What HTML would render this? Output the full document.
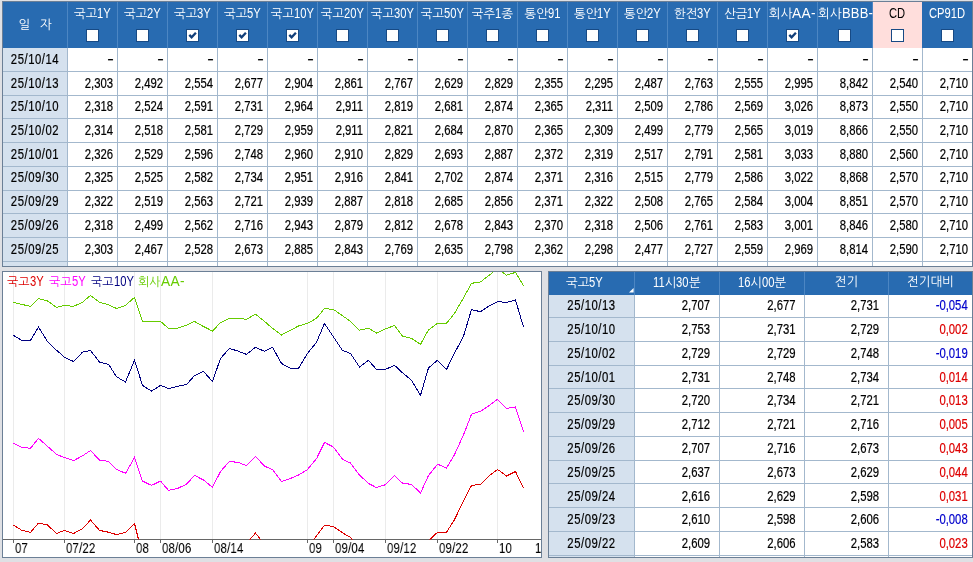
<!DOCTYPE html>
<html lang="ko"><head><meta charset="utf-8"><title>금리 추이</title>
<style>
html,body{margin:0;padding:0}
body{width:973px;height:562px;overflow:hidden;position:relative;background:#DFE0E4;font-family:"Liberation Sans","NanumGothic","Noto Sans CJK KR",sans-serif;font-size:12px;color:#000}
div{position:absolute;box-sizing:border-box;white-space:nowrap}
.t{overflow:hidden}
.rw{left:0;height:23.7px;line-height:23.7px;will-change:transform}
.rw div{top:0;height:23.7px}
.hl{height:1px;background:#A3B8CD}
.vl{width:1px;background:#A3B8CD}
.hs{width:1px;background:#4C86C3}
.h{background:#286BB1;color:#fff;text-align:center}
.hc{will-change:transform;color:#fff;text-align:center;height:14px;line-height:14px;font-size:12.5px}
i{display:inline-block;font-style:normal;font-size:14px;transform:scaleX(.8);transform-origin:0 50%}
.d{background:#D5E1EE;text-align:center}
.n{text-align:right;padding-right:5px;font-size:14.5px;transform:scaleX(.78);transform-origin:100% 50%;-webkit-text-stroke:.22px}
.dt{text-align:center;font-size:14.5px;transform:scaleX(.78);letter-spacing:.7px;-webkit-text-stroke:.22px}
.m{transform:scaleX(1.35);padding-right:2.3px}
.xl{will-change:transform;font-size:14.5px;height:14px;line-height:14px;transform:scaleX(.78);transform-origin:0 50%;-webkit-text-stroke:.05px;letter-spacing:.3px}
.lg{will-change:transform;font-size:12px;height:14px;line-height:14px}
.cb{width:13px;height:13px;background:#fff;border:1px solid #174A85}
.r{color:#DD0000}.b{color:#0000CC}
svg{position:absolute}

</style></head><body>
<div class="t" style="left:2px;top:1px;width:971px;height:266px;background:#fff;border:1px solid #6B7F96">
<div class="h" style="left:0;top:0;width:969px;height:46px"></div>
<div class="d" style="left:0;top:46px;width:64px;height:218px"></div>
<div style="left:870px;top:0;width:49px;height:46px;background:#FFDEDC"></div>
<div class="hs" style="left:64px;top:0;height:46px"></div>
<div class="hs" style="left:114px;top:0;height:46px"></div>
<div class="hs" style="left:164px;top:0;height:46px"></div>
<div class="hs" style="left:214px;top:0;height:46px"></div>
<div class="hs" style="left:264px;top:0;height:46px"></div>
<div class="hs" style="left:314px;top:0;height:46px"></div>
<div class="hs" style="left:364px;top:0;height:46px"></div>
<div class="hs" style="left:414px;top:0;height:46px"></div>
<div class="hs" style="left:464px;top:0;height:46px"></div>
<div class="hs" style="left:514px;top:0;height:46px"></div>
<div class="hs" style="left:564px;top:0;height:46px"></div>
<div class="hs" style="left:614px;top:0;height:46px"></div>
<div class="hs" style="left:664px;top:0;height:46px"></div>
<div class="hs" style="left:714px;top:0;height:46px"></div>
<div class="hs" style="left:764px;top:0;height:46px"></div>
<div class="hs" style="left:814px;top:0;height:46px"></div>
<div class="hs" style="left:869px;top:0;height:46px"></div>
<div class="vl" style="left:64px;top:46px;height:218px"></div>
<div class="vl" style="left:114px;top:46px;height:218px"></div>
<div class="vl" style="left:164px;top:46px;height:218px"></div>
<div class="vl" style="left:214px;top:46px;height:218px"></div>
<div class="vl" style="left:264px;top:46px;height:218px"></div>
<div class="vl" style="left:314px;top:46px;height:218px"></div>
<div class="vl" style="left:364px;top:46px;height:218px"></div>
<div class="vl" style="left:414px;top:46px;height:218px"></div>
<div class="vl" style="left:464px;top:46px;height:218px"></div>
<div class="vl" style="left:514px;top:46px;height:218px"></div>
<div class="vl" style="left:564px;top:46px;height:218px"></div>
<div class="vl" style="left:614px;top:46px;height:218px"></div>
<div class="vl" style="left:664px;top:46px;height:218px"></div>
<div class="vl" style="left:714px;top:46px;height:218px"></div>
<div class="vl" style="left:764px;top:46px;height:218px"></div>
<div class="vl" style="left:814px;top:46px;height:218px"></div>
<div class="vl" style="left:869px;top:46px;height:218px"></div>
<div class="vl" style="left:919px;top:46px;height:218px"></div>
<div class="hl" style="left:0;top:69px;width:969px"></div>
<div class="hl" style="left:0;top:93px;width:969px"></div>
<div class="hl" style="left:0;top:116px;width:969px"></div>
<div class="hl" style="left:0;top:140px;width:969px"></div>
<div class="hl" style="left:0;top:164px;width:969px"></div>
<div class="hl" style="left:0;top:188px;width:969px"></div>
<div class="hl" style="left:0;top:211px;width:969px"></div>
<div class="hl" style="left:0;top:235px;width:969px"></div>
<div class="hl" style="left:0;top:259px;width:969px"></div>
<div class="hc" style="left:0;top:16px;width:64px;word-spacing:6px">일 자</div>
<div class="hc" style="left:65px;top:4px;width:49px">국고<i style="margin-right:-3.42px">1Y</i></div>
<div class="cb" style="left:83px;top:27px"></div>
<div class="hc" style="left:115px;top:4px;width:49px">국고<i style="margin-right:-3.42px">2Y</i></div>
<div class="cb" style="left:133px;top:27px"></div>
<div class="hc" style="left:165px;top:4px;width:49px">국고<i style="margin-right:-3.42px">3Y</i></div>
<div class="cb" style="left:183px;top:27px"><svg width="11" height="11" viewBox="0 0 11 11" style="left:0;top:0"><path d="M2.3 4.9 L4.6 7.4 L8.9 2.7" fill="none" stroke="#123F7A" stroke-width="2.3"/></svg></div>
<div class="hc" style="left:215px;top:4px;width:49px">국고<i style="margin-right:-3.42px">5Y</i></div>
<div class="cb" style="left:233px;top:27px"><svg width="11" height="11" viewBox="0 0 11 11" style="left:0;top:0"><path d="M2.3 4.9 L4.6 7.4 L8.9 2.7" fill="none" stroke="#123F7A" stroke-width="2.3"/></svg></div>
<div class="hc" style="left:265px;top:4px;width:49px">국고<i style="margin-right:-4.98px">10Y</i></div>
<div class="cb" style="left:283px;top:27px"><svg width="11" height="11" viewBox="0 0 11 11" style="left:0;top:0"><path d="M2.3 4.9 L4.6 7.4 L8.9 2.7" fill="none" stroke="#123F7A" stroke-width="2.3"/></svg></div>
<div class="hc" style="left:315px;top:4px;width:49px">국고<i style="margin-right:-4.98px">20Y</i></div>
<div class="cb" style="left:333px;top:27px"></div>
<div class="hc" style="left:365px;top:4px;width:49px">국고<i style="margin-right:-4.98px">30Y</i></div>
<div class="cb" style="left:383px;top:27px"></div>
<div class="hc" style="left:415px;top:4px;width:49px">국고<i style="margin-right:-4.98px">50Y</i></div>
<div class="cb" style="left:433px;top:27px"></div>
<div class="hc" style="left:465px;top:4px;width:49px">국주<i style="margin-right:-1.56px">1</i>종</div>
<div class="cb" style="left:483px;top:27px"></div>
<div class="hc" style="left:515px;top:4px;width:49px">통안<i style="margin-right:-3.11px">91</i></div>
<div class="cb" style="left:533px;top:27px"></div>
<div class="hc" style="left:565px;top:4px;width:49px">통안<i style="margin-right:-3.42px">1Y</i></div>
<div class="cb" style="left:583px;top:27px"></div>
<div class="hc" style="left:615px;top:4px;width:49px">통안<i style="margin-right:-3.42px">2Y</i></div>
<div class="cb" style="left:633px;top:27px"></div>
<div class="hc" style="left:665px;top:4px;width:49px">한전<i style="margin-right:-3.42px">3Y</i></div>
<div class="cb" style="left:683px;top:27px"></div>
<div class="hc" style="left:715px;top:4px;width:49px">산금<i style="margin-right:-3.42px">1Y</i></div>
<div class="cb" style="left:733px;top:27px"></div>
<div class="hc" style="left:765px;top:4px;width:49px">회사<i style="margin-right:-0.48px;letter-spacing:0.3px;transform:scaleX(0.98)">AA-</i></div>
<div class="cb" style="left:783px;top:27px"><svg width="11" height="11" viewBox="0 0 11 11" style="left:0;top:0"><path d="M2.3 4.9 L4.6 7.4 L8.9 2.7" fill="none" stroke="#123F7A" stroke-width="2.3"/></svg></div>
<div class="hc" style="left:815px;top:4px;width:54px">회사<i style="margin-right:-2.34px;letter-spacing:0.2px;transform:scaleX(0.93)">BBB-</i></div>
<div class="cb" style="left:835px;top:27px"></div>
<div class="hc" style="color:#000;left:870px;top:4px;width:49px"><i style="margin-right:-4.04px">CD</i></div>
<div class="cb" style="left:888px;top:27px"></div>
<div class="hc" style="left:920px;top:4px;width:49px"><i style="margin-right:-9.03px">CP91D</i></div>
<div class="cb" style="left:938px;top:27px"></div>
<div class="rw" style="top:45.95px;width:969px">
<div class="dt" style="left:0;width:64px">25/10/14</div>
<div class="n m" style="left:65px;width:49px">-</div>
<div class="n m" style="left:115px;width:49px">-</div>
<div class="n m" style="left:165px;width:49px">-</div>
<div class="n m" style="left:215px;width:49px">-</div>
<div class="n m" style="left:265px;width:49px">-</div>
<div class="n m" style="left:315px;width:49px">-</div>
<div class="n m" style="left:365px;width:49px">-</div>
<div class="n m" style="left:415px;width:49px">-</div>
<div class="n m" style="left:465px;width:49px">-</div>
<div class="n m" style="left:515px;width:49px">-</div>
<div class="n m" style="left:565px;width:49px">-</div>
<div class="n m" style="left:615px;width:49px">-</div>
<div class="n m" style="left:665px;width:49px">-</div>
<div class="n m" style="left:715px;width:49px">-</div>
<div class="n m" style="left:765px;width:49px">-</div>
<div class="n m" style="left:815px;width:54px">-</div>
<div class="n m" style="left:870px;width:49px">-</div>
<div class="n m" style="left:920px;width:49px">-</div>
</div>
<div class="rw" style="top:69.65px;width:969px">
<div class="dt" style="left:0;width:64px">25/10/13</div>
<div class="n" style="left:65px;width:49px">2,303</div>
<div class="n" style="left:115px;width:49px">2,492</div>
<div class="n" style="left:165px;width:49px">2,554</div>
<div class="n" style="left:215px;width:49px">2,677</div>
<div class="n" style="left:265px;width:49px">2,904</div>
<div class="n" style="left:315px;width:49px">2,861</div>
<div class="n" style="left:365px;width:49px">2,767</div>
<div class="n" style="left:415px;width:49px">2,629</div>
<div class="n" style="left:465px;width:49px">2,829</div>
<div class="n" style="left:515px;width:49px">2,355</div>
<div class="n" style="left:565px;width:49px">2,295</div>
<div class="n" style="left:615px;width:49px">2,487</div>
<div class="n" style="left:665px;width:49px">2,763</div>
<div class="n" style="left:715px;width:49px">2,555</div>
<div class="n" style="left:765px;width:49px">2,995</div>
<div class="n" style="left:815px;width:54px">8,842</div>
<div class="n" style="left:870px;width:49px">2,540</div>
<div class="n" style="left:920px;width:49px">2,710</div>
</div>
<div class="rw" style="top:93.35px;width:969px">
<div class="dt" style="left:0;width:64px">25/10/10</div>
<div class="n" style="left:65px;width:49px">2,318</div>
<div class="n" style="left:115px;width:49px">2,524</div>
<div class="n" style="left:165px;width:49px">2,591</div>
<div class="n" style="left:215px;width:49px">2,731</div>
<div class="n" style="left:265px;width:49px">2,964</div>
<div class="n" style="left:315px;width:49px">2,911</div>
<div class="n" style="left:365px;width:49px">2,819</div>
<div class="n" style="left:415px;width:49px">2,681</div>
<div class="n" style="left:465px;width:49px">2,874</div>
<div class="n" style="left:515px;width:49px">2,365</div>
<div class="n" style="left:565px;width:49px">2,311</div>
<div class="n" style="left:615px;width:49px">2,509</div>
<div class="n" style="left:665px;width:49px">2,786</div>
<div class="n" style="left:715px;width:49px">2,569</div>
<div class="n" style="left:765px;width:49px">3,026</div>
<div class="n" style="left:815px;width:54px">8,873</div>
<div class="n" style="left:870px;width:49px">2,550</div>
<div class="n" style="left:920px;width:49px">2,710</div>
</div>
<div class="rw" style="top:117.05px;width:969px">
<div class="dt" style="left:0;width:64px">25/10/02</div>
<div class="n" style="left:65px;width:49px">2,314</div>
<div class="n" style="left:115px;width:49px">2,518</div>
<div class="n" style="left:165px;width:49px">2,581</div>
<div class="n" style="left:215px;width:49px">2,729</div>
<div class="n" style="left:265px;width:49px">2,959</div>
<div class="n" style="left:315px;width:49px">2,911</div>
<div class="n" style="left:365px;width:49px">2,821</div>
<div class="n" style="left:415px;width:49px">2,684</div>
<div class="n" style="left:465px;width:49px">2,870</div>
<div class="n" style="left:515px;width:49px">2,365</div>
<div class="n" style="left:565px;width:49px">2,309</div>
<div class="n" style="left:615px;width:49px">2,499</div>
<div class="n" style="left:665px;width:49px">2,779</div>
<div class="n" style="left:715px;width:49px">2,565</div>
<div class="n" style="left:765px;width:49px">3,019</div>
<div class="n" style="left:815px;width:54px">8,866</div>
<div class="n" style="left:870px;width:49px">2,550</div>
<div class="n" style="left:920px;width:49px">2,710</div>
</div>
<div class="rw" style="top:140.75px;width:969px">
<div class="dt" style="left:0;width:64px">25/10/01</div>
<div class="n" style="left:65px;width:49px">2,326</div>
<div class="n" style="left:115px;width:49px">2,529</div>
<div class="n" style="left:165px;width:49px">2,596</div>
<div class="n" style="left:215px;width:49px">2,748</div>
<div class="n" style="left:265px;width:49px">2,960</div>
<div class="n" style="left:315px;width:49px">2,910</div>
<div class="n" style="left:365px;width:49px">2,829</div>
<div class="n" style="left:415px;width:49px">2,693</div>
<div class="n" style="left:465px;width:49px">2,887</div>
<div class="n" style="left:515px;width:49px">2,372</div>
<div class="n" style="left:565px;width:49px">2,319</div>
<div class="n" style="left:615px;width:49px">2,517</div>
<div class="n" style="left:665px;width:49px">2,791</div>
<div class="n" style="left:715px;width:49px">2,581</div>
<div class="n" style="left:765px;width:49px">3,033</div>
<div class="n" style="left:815px;width:54px">8,880</div>
<div class="n" style="left:870px;width:49px">2,560</div>
<div class="n" style="left:920px;width:49px">2,710</div>
</div>
<div class="rw" style="top:164.45px;width:969px">
<div class="dt" style="left:0;width:64px">25/09/30</div>
<div class="n" style="left:65px;width:49px">2,325</div>
<div class="n" style="left:115px;width:49px">2,525</div>
<div class="n" style="left:165px;width:49px">2,582</div>
<div class="n" style="left:215px;width:49px">2,734</div>
<div class="n" style="left:265px;width:49px">2,951</div>
<div class="n" style="left:315px;width:49px">2,916</div>
<div class="n" style="left:365px;width:49px">2,841</div>
<div class="n" style="left:415px;width:49px">2,702</div>
<div class="n" style="left:465px;width:49px">2,874</div>
<div class="n" style="left:515px;width:49px">2,371</div>
<div class="n" style="left:565px;width:49px">2,316</div>
<div class="n" style="left:615px;width:49px">2,515</div>
<div class="n" style="left:665px;width:49px">2,779</div>
<div class="n" style="left:715px;width:49px">2,586</div>
<div class="n" style="left:765px;width:49px">3,022</div>
<div class="n" style="left:815px;width:54px">8,868</div>
<div class="n" style="left:870px;width:49px">2,570</div>
<div class="n" style="left:920px;width:49px">2,710</div>
</div>
<div class="rw" style="top:188.15px;width:969px">
<div class="dt" style="left:0;width:64px">25/09/29</div>
<div class="n" style="left:65px;width:49px">2,322</div>
<div class="n" style="left:115px;width:49px">2,519</div>
<div class="n" style="left:165px;width:49px">2,563</div>
<div class="n" style="left:215px;width:49px">2,721</div>
<div class="n" style="left:265px;width:49px">2,939</div>
<div class="n" style="left:315px;width:49px">2,887</div>
<div class="n" style="left:365px;width:49px">2,818</div>
<div class="n" style="left:415px;width:49px">2,685</div>
<div class="n" style="left:465px;width:49px">2,856</div>
<div class="n" style="left:515px;width:49px">2,371</div>
<div class="n" style="left:565px;width:49px">2,322</div>
<div class="n" style="left:615px;width:49px">2,508</div>
<div class="n" style="left:665px;width:49px">2,765</div>
<div class="n" style="left:715px;width:49px">2,584</div>
<div class="n" style="left:765px;width:49px">3,004</div>
<div class="n" style="left:815px;width:54px">8,851</div>
<div class="n" style="left:870px;width:49px">2,570</div>
<div class="n" style="left:920px;width:49px">2,710</div>
</div>
<div class="rw" style="top:211.85px;width:969px">
<div class="dt" style="left:0;width:64px">25/09/26</div>
<div class="n" style="left:65px;width:49px">2,318</div>
<div class="n" style="left:115px;width:49px">2,499</div>
<div class="n" style="left:165px;width:49px">2,562</div>
<div class="n" style="left:215px;width:49px">2,716</div>
<div class="n" style="left:265px;width:49px">2,943</div>
<div class="n" style="left:315px;width:49px">2,879</div>
<div class="n" style="left:365px;width:49px">2,812</div>
<div class="n" style="left:415px;width:49px">2,678</div>
<div class="n" style="left:465px;width:49px">2,843</div>
<div class="n" style="left:515px;width:49px">2,370</div>
<div class="n" style="left:565px;width:49px">2,318</div>
<div class="n" style="left:615px;width:49px">2,506</div>
<div class="n" style="left:665px;width:49px">2,761</div>
<div class="n" style="left:715px;width:49px">2,583</div>
<div class="n" style="left:765px;width:49px">3,001</div>
<div class="n" style="left:815px;width:54px">8,846</div>
<div class="n" style="left:870px;width:49px">2,580</div>
<div class="n" style="left:920px;width:49px">2,710</div>
</div>
<div class="rw" style="top:235.55px;width:969px">
<div class="dt" style="left:0;width:64px">25/09/25</div>
<div class="n" style="left:65px;width:49px">2,303</div>
<div class="n" style="left:115px;width:49px">2,467</div>
<div class="n" style="left:165px;width:49px">2,528</div>
<div class="n" style="left:215px;width:49px">2,673</div>
<div class="n" style="left:265px;width:49px">2,885</div>
<div class="n" style="left:315px;width:49px">2,843</div>
<div class="n" style="left:365px;width:49px">2,769</div>
<div class="n" style="left:415px;width:49px">2,635</div>
<div class="n" style="left:465px;width:49px">2,798</div>
<div class="n" style="left:515px;width:49px">2,362</div>
<div class="n" style="left:565px;width:49px">2,298</div>
<div class="n" style="left:615px;width:49px">2,477</div>
<div class="n" style="left:665px;width:49px">2,727</div>
<div class="n" style="left:715px;width:49px">2,559</div>
<div class="n" style="left:765px;width:49px">2,969</div>
<div class="n" style="left:815px;width:54px">8,814</div>
<div class="n" style="left:870px;width:49px">2,590</div>
<div class="n" style="left:920px;width:49px">2,710</div>
</div>
</div>
<div class="t" style="left:2px;top:271px;width:540px;height:287px;background:#fff;border:1px solid #6B7F96"></div>
<svg width="973" height="562" viewBox="0 0 973 562" style="left:0;top:0" font-family="Liberation Sans, NanumGothic, sans-serif" font-size="12">
<defs><clipPath id="c"><rect x="3" y="272" width="538" height="267.5"/></clipPath></defs>
<line x1="13.5" y1="272" x2="13.5" y2="539" stroke="#EBEBEB" stroke-width="1"/>
<line x1="13.5" y1="539" x2="13.5" y2="543" stroke="#666" stroke-width="1"/>
<line x1="64.5" y1="272" x2="64.5" y2="539" stroke="#EBEBEB" stroke-width="1"/>
<line x1="64.5" y1="539" x2="64.5" y2="543" stroke="#666" stroke-width="1"/>
<line x1="134.5" y1="272" x2="134.5" y2="539" stroke="#EBEBEB" stroke-width="1"/>
<line x1="134.5" y1="539" x2="134.5" y2="543" stroke="#666" stroke-width="1"/>
<line x1="160.5" y1="272" x2="160.5" y2="539" stroke="#EBEBEB" stroke-width="1"/>
<line x1="160.5" y1="539" x2="160.5" y2="543" stroke="#666" stroke-width="1"/>
<line x1="212.5" y1="272" x2="212.5" y2="539" stroke="#EBEBEB" stroke-width="1"/>
<line x1="212.5" y1="539" x2="212.5" y2="543" stroke="#666" stroke-width="1"/>
<line x1="307.5" y1="272" x2="307.5" y2="539" stroke="#EBEBEB" stroke-width="1"/>
<line x1="307.5" y1="539" x2="307.5" y2="543" stroke="#666" stroke-width="1"/>
<line x1="333.5" y1="272" x2="333.5" y2="539" stroke="#EBEBEB" stroke-width="1"/>
<line x1="333.5" y1="539" x2="333.5" y2="543" stroke="#666" stroke-width="1"/>
<line x1="385.5" y1="272" x2="385.5" y2="539" stroke="#EBEBEB" stroke-width="1"/>
<line x1="385.5" y1="539" x2="385.5" y2="543" stroke="#666" stroke-width="1"/>
<line x1="437.5" y1="272" x2="437.5" y2="539" stroke="#EBEBEB" stroke-width="1"/>
<line x1="437.5" y1="539" x2="437.5" y2="543" stroke="#666" stroke-width="1"/>
<line x1="497.5" y1="272" x2="497.5" y2="539" stroke="#EBEBEB" stroke-width="1"/>
<line x1="497.5" y1="539" x2="497.5" y2="543" stroke="#666" stroke-width="1"/>
<line x1="3" y1="539.5" x2="541" y2="539.5" stroke="#666" stroke-width="1"/>
<g clip-path="url(#c)" fill="none" stroke-width="1" stroke-linejoin="miter" shape-rendering="crispEdges">
<polyline stroke="#66CC00" points="13.5,302.3 21.5,304.3 30.5,306.4 38.5,298.5 47.5,300.9 56.5,307.4 64.5,305.3 73.5,306.4 82.5,302.3 90.5,295.4 99.5,302.3 108.5,304.8 116.5,308.5 125.5,305.4 134.5,297.4 142.5,321.4 151.5,321.4 160.5,321.4 168.5,328.3 177.5,328.3 186.5,325.2 194.5,321.4 203.5,326.5 212.5,331.1 220.5,322.6 229.5,318.3 238.5,318.3 246.5,319.4 255.5,314.1 264.5,321.4 272.5,328.3 281.5,335.0 290.5,330.2 298.5,326.0 307.5,323.4 316.5,318.3 324.5,308.5 333.5,309.5 342.5,315.7 350.5,321.4 359.5,330.2 368.5,328.3 376.5,333.0 385.5,328.8 394.5,325.6 402.5,336.1 411.5,338.4 420.5,344.3 428.5,329.9 437.5,323.3 446.5,323.3 454.5,313.4 463.5,297.9 471.5,283.3 480.5,282.0 489.5,275.0 497.5,268.5 506.5,275.2 515.5,272.4 523.5,285.7"/>
<polyline stroke="#000080" points="13.5,335.3 21.5,340.3 30.5,340.3 38.5,327.1 47.5,341.5 56.5,350.2 64.5,357.2 73.5,361.5 82.5,352.2 90.5,350.4 99.5,362.2 108.5,364.3 116.5,376.7 125.5,382.1 134.5,360.2 142.5,385.4 151.5,391.1 160.5,385.4 168.5,388.5 177.5,386.4 186.5,384.6 194.5,375.6 203.5,371.4 212.5,381.5 220.5,358.4 229.5,348.4 238.5,351.3 246.5,354.4 255.5,347.3 264.5,351.3 272.5,347.3 281.5,363.5 290.5,368.3 298.5,368.3 307.5,353.4 316.5,342.3 324.5,323.4 333.5,336.9 342.5,350.5 350.5,353.4 359.5,367.0 368.5,360.4 376.5,369.4 385.5,369.4 394.5,365.3 402.5,372.8 411.5,380.2 420.5,395.3 428.5,367.9 437.5,360.2 446.5,369.5 454.5,353.2 463.5,336.2 471.5,309.6 480.5,311.7 489.5,305.6 497.5,301.6 506.5,302.4 515.5,300.0 523.5,327.0"/>
<polyline stroke="#FF00FF" points="13.5,443.2 21.5,447.4 30.5,448.3 38.5,438.3 47.5,446.3 56.5,454.4 64.5,457.6 73.5,460.6 82.5,455.9 90.5,450.5 99.5,460.2 108.5,461.3 116.5,469.2 125.5,473.4 134.5,457.5 142.5,481.1 151.5,485.4 160.5,481.1 168.5,490.4 177.5,488.5 186.5,484.2 194.5,475.4 203.5,480.0 212.5,487.3 220.5,471.5 229.5,461.4 238.5,462.5 246.5,465.6 255.5,456.3 264.5,466.2 272.5,469.5 281.5,481.5 290.5,478.4 298.5,475.0 307.5,469.5 316.5,458.7 324.5,442.4 333.5,447.1 342.5,459.2 350.5,463.0 359.5,475.0 368.5,483.5 376.5,487.6 385.5,484.7 394.5,475.4 402.5,483.2 411.5,484.4 420.5,493.0 428.5,475.5 437.5,464.2 446.5,468.0 454.5,454.6 463.5,434.9 471.5,414.3 480.5,411.3 489.5,405.4 497.5,399.3 506.5,408.5 515.5,407.0 523.5,431.7"/>
<polyline stroke="#DD0000" points="13.5,525.0 21.5,530.1 30.5,532.4 38.5,523.1 47.5,525.0 56.5,533.5 64.5,530.4 73.5,533.5 82.5,528.8 90.5,520.0 99.5,530.4 108.5,532.2 116.5,534.6 125.5,532.4 134.5,523.4 142.5,555.3 151.5,560.0 160.5,560.0 168.5,560.0 177.5,560.0 186.5,560.0 194.5,560.0 203.5,560.0 212.5,560.0 220.5,560.0 229.5,560.0 238.5,560.0 246.5,543.3 255.5,533.1 264.5,544.3 272.5,560.0 281.5,560.0 290.5,560.0 298.5,560.0 307.5,546.9 316.5,536.0 324.5,525.1 333.5,526.5 342.5,532.8 350.5,537.5 359.5,549.0 368.5,560.0 376.5,560.0 385.5,560.0 394.5,560.0 402.5,560.0 411.5,560.0 420.5,560.0 428.5,540.8 437.5,532.3 446.5,532.3 454.5,519.6 463.5,501.0 471.5,485.5 480.5,484.3 489.5,475.4 497.5,469.4 506.5,476.0 515.5,471.5 523.5,488.0"/>
</g>
</svg>
<div class="xl" style="left:15px;top:541px">07</div>
<div class="xl" style="left:66px;top:541px">07/22</div>
<div class="xl" style="left:136px;top:541px">08</div>
<div class="xl" style="left:162px;top:541px">08/06</div>
<div class="xl" style="left:214px;top:541px">08/14</div>
<div class="xl" style="left:309px;top:541px">09</div>
<div class="xl" style="left:335px;top:541px">09/04</div>
<div class="xl" style="left:387px;top:541px">09/12</div>
<div class="xl" style="left:439px;top:541px">09/22</div>
<div class="xl" style="left:499px;top:541px">10</div>
<div class="xl" style="left:535px;top:541px">1</div>
<div class="lg" style="left:7px;top:274px;color:#DD0000">국고<i style="margin-right:-3.42px">3Y</i></div>
<div class="lg" style="left:49px;top:274px;color:#FF00FF">국고<i style="margin-right:-3.42px">5Y</i></div>
<div class="lg" style="left:91px;top:274px;color:#000080">국고<i style="margin-right:-4.98px">10Y</i></div>
<div class="lg" style="left:138px;top:274px;color:#66CC00">회사<i style="margin-right:-0.48px;letter-spacing:0.3px;transform:scaleX(0.98)">AA-</i></div>
<div class="t" style="left:548px;top:271px;width:425px;height:287px;background:#fff;border:1px solid #6B7F96">
<div class="h" style="left:0;top:0;width:423px;height:23px"></div>
<div class="d" style="left:0;top:23px;width:85px;height:263px"></div>
<div class="hs" style="left:85px;top:0;height:23px"></div>
<div class="vl" style="left:85px;top:23px;height:263px"></div>
<div class="hs" style="left:170px;top:0;height:23px"></div>
<div class="vl" style="left:170px;top:23px;height:263px"></div>
<div class="hs" style="left:255px;top:0;height:23px"></div>
<div class="vl" style="left:255px;top:23px;height:263px"></div>
<div class="hs" style="left:339px;top:0;height:23px"></div>
<div class="vl" style="left:339px;top:23px;height:263px"></div>
<div class="hl" style="left:0;top:45px;width:423px"></div>
<div class="hl" style="left:0;top:69px;width:423px"></div>
<div class="hl" style="left:0;top:93px;width:423px"></div>
<div class="hl" style="left:0;top:116px;width:423px"></div>
<div class="hl" style="left:0;top:140px;width:423px"></div>
<div class="hl" style="left:0;top:164px;width:423px"></div>
<div class="hl" style="left:0;top:188px;width:423px"></div>
<div class="hl" style="left:0;top:211px;width:423px"></div>
<div class="hl" style="left:0;top:235px;width:423px"></div>
<div class="hl" style="left:0;top:259px;width:423px"></div>
<div class="hl" style="left:0;top:283px;width:423px"></div>
<div class="hc" style="left:-7px;top:3px;width:85px">국고<i style="margin-right:-3.42px">5Y</i></div>
<div class="hc" style="left:86px;top:3px;width:84px"><i style="margin-right:-3.11px">11</i>시<i style="margin-right:-3.11px">30</i>분</div>
<div class="hc" style="left:171px;top:3px;width:84px"><i style="margin-right:-3.11px">16</i>시<i style="margin-right:-3.11px">00</i>분</div>
<div class="hc" style="left:256px;top:3px;width:83px">전기</div>
<div class="hc" style="left:340px;top:3px;width:83px">전기대비</div>
<svg width="5" height="5" viewBox="0 0 5 5" style="left:80px;top:16px"><path d="M4.6 0 L4.6 4.6 L0 4.6 Z" fill="#fff"/></svg>
<div class="rw" style="top:22.20px;width:423px">
<div class="dt" style="left:0;width:85px">25/10/13</div>
<div class="n" style="left:86px;width:84px;padding-right:11.5px">2,707</div>
<div class="n" style="left:171px;width:84px;padding-right:10.8px">2,677</div>
<div class="n" style="left:256px;width:83px;padding-right:11.5px">2,731</div>
<div class="n b" style="left:340px;width:83px;padding-right:5.5px">-0,054</div>
</div>
<div class="rw" style="top:46.00px;width:423px">
<div class="dt" style="left:0;width:85px">25/10/10</div>
<div class="n" style="left:86px;width:84px;padding-right:11.5px">2,753</div>
<div class="n" style="left:171px;width:84px;padding-right:10.8px">2,731</div>
<div class="n" style="left:256px;width:83px;padding-right:11.5px">2,729</div>
<div class="n r" style="left:340px;width:83px;padding-right:5.5px">0,002</div>
</div>
<div class="rw" style="top:69.80px;width:423px">
<div class="dt" style="left:0;width:85px">25/10/02</div>
<div class="n" style="left:86px;width:84px;padding-right:11.5px">2,729</div>
<div class="n" style="left:171px;width:84px;padding-right:10.8px">2,729</div>
<div class="n" style="left:256px;width:83px;padding-right:11.5px">2,748</div>
<div class="n b" style="left:340px;width:83px;padding-right:5.5px">-0,019</div>
</div>
<div class="rw" style="top:93.60px;width:423px">
<div class="dt" style="left:0;width:85px">25/10/01</div>
<div class="n" style="left:86px;width:84px;padding-right:11.5px">2,731</div>
<div class="n" style="left:171px;width:84px;padding-right:10.8px">2,748</div>
<div class="n" style="left:256px;width:83px;padding-right:11.5px">2,734</div>
<div class="n r" style="left:340px;width:83px;padding-right:5.5px">0,014</div>
</div>
<div class="rw" style="top:117.40px;width:423px">
<div class="dt" style="left:0;width:85px">25/09/30</div>
<div class="n" style="left:86px;width:84px;padding-right:11.5px">2,720</div>
<div class="n" style="left:171px;width:84px;padding-right:10.8px">2,734</div>
<div class="n" style="left:256px;width:83px;padding-right:11.5px">2,721</div>
<div class="n r" style="left:340px;width:83px;padding-right:5.5px">0,013</div>
</div>
<div class="rw" style="top:141.20px;width:423px">
<div class="dt" style="left:0;width:85px">25/09/29</div>
<div class="n" style="left:86px;width:84px;padding-right:11.5px">2,712</div>
<div class="n" style="left:171px;width:84px;padding-right:10.8px">2,721</div>
<div class="n" style="left:256px;width:83px;padding-right:11.5px">2,716</div>
<div class="n r" style="left:340px;width:83px;padding-right:5.5px">0,005</div>
</div>
<div class="rw" style="top:165.00px;width:423px">
<div class="dt" style="left:0;width:85px">25/09/26</div>
<div class="n" style="left:86px;width:84px;padding-right:11.5px">2,707</div>
<div class="n" style="left:171px;width:84px;padding-right:10.8px">2,716</div>
<div class="n" style="left:256px;width:83px;padding-right:11.5px">2,673</div>
<div class="n r" style="left:340px;width:83px;padding-right:5.5px">0,043</div>
</div>
<div class="rw" style="top:188.80px;width:423px">
<div class="dt" style="left:0;width:85px">25/09/25</div>
<div class="n" style="left:86px;width:84px;padding-right:11.5px">2,637</div>
<div class="n" style="left:171px;width:84px;padding-right:10.8px">2,673</div>
<div class="n" style="left:256px;width:83px;padding-right:11.5px">2,629</div>
<div class="n r" style="left:340px;width:83px;padding-right:5.5px">0,044</div>
</div>
<div class="rw" style="top:212.60px;width:423px">
<div class="dt" style="left:0;width:85px">25/09/24</div>
<div class="n" style="left:86px;width:84px;padding-right:11.5px">2,616</div>
<div class="n" style="left:171px;width:84px;padding-right:10.8px">2,629</div>
<div class="n" style="left:256px;width:83px;padding-right:11.5px">2,598</div>
<div class="n r" style="left:340px;width:83px;padding-right:5.5px">0,031</div>
</div>
<div class="rw" style="top:236.40px;width:423px">
<div class="dt" style="left:0;width:85px">25/09/23</div>
<div class="n" style="left:86px;width:84px;padding-right:11.5px">2,610</div>
<div class="n" style="left:171px;width:84px;padding-right:10.8px">2,598</div>
<div class="n" style="left:256px;width:83px;padding-right:11.5px">2,606</div>
<div class="n b" style="left:340px;width:83px;padding-right:5.5px">-0,008</div>
</div>
<div class="rw" style="top:260.20px;width:423px">
<div class="dt" style="left:0;width:85px">25/09/22</div>
<div class="n" style="left:86px;width:84px;padding-right:11.5px">2,609</div>
<div class="n" style="left:171px;width:84px;padding-right:10.8px">2,606</div>
<div class="n" style="left:256px;width:83px;padding-right:11.5px">2,583</div>
<div class="n r" style="left:340px;width:83px;padding-right:5.5px">0,023</div>
</div>
</div>
</body></html>
